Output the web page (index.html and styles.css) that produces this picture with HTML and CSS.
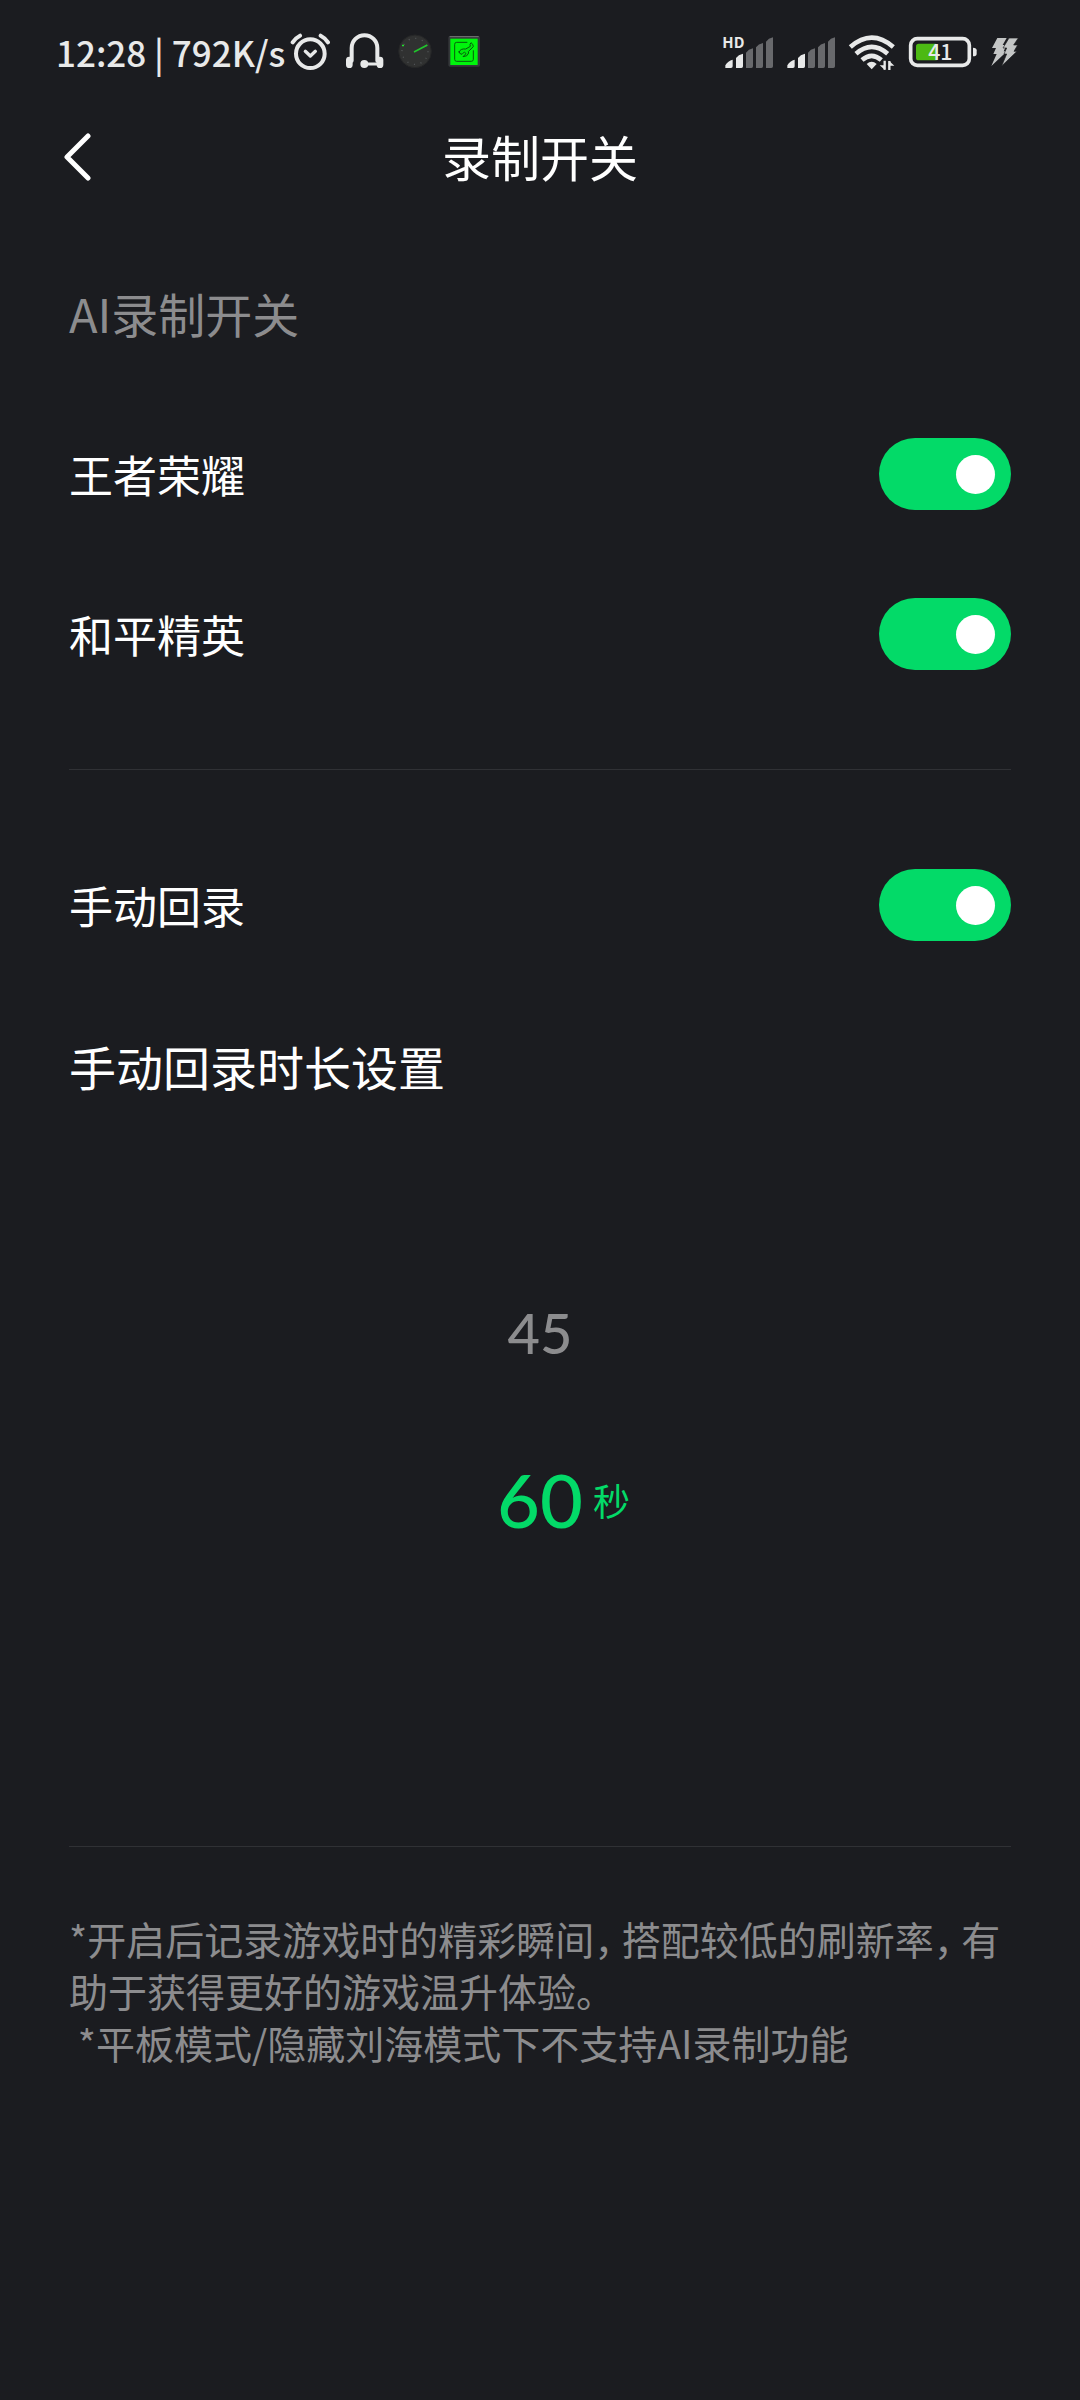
FILE: index.html
```html
<!DOCTYPE html>
<html lang="zh-CN">
<head>
<meta charset="utf-8">
<meta name="viewport" content="width=device-width, initial-scale=1">
<title>录制开关</title>
<link rel="stylesheet" href="styles.css">
</head>
<body>
<div class="status">
  <span class="status-text">12:28 | 792K/s</span>
  <div class="status-left">
    <svg width="41" height="43" viewBox="30 30 123 129" fill="none" stroke="#e8e9e9" stroke-linecap="round" stroke-linejoin="round">
      <circle cx="91" cy="101" r="43" stroke-width="12"/>
      <path d="M76 94l15 14 15-14" stroke-width="10"/>
      <path d="M38 67q8-13 22-20M122 47q14 7 22 20" stroke-width="12"/>
    </svg>
    <svg width="39" height="43" viewBox="192 30 117 129" fill="none" stroke="#e8e9e9" stroke-linecap="round">
      <path d="M212 122V84a38 38 0 0 1 77 0v38" stroke-width="12"/>
      <path d="M205 120v14M297 120v14" stroke-width="20"/>
      <path d="M250 132h42" stroke-width="9"/>
      <circle cx="250" cy="132" r="12" fill="#e8e9e9" stroke="none"/>
    </svg>
    <svg width="35" height="43" viewBox="354 30 105 129" fill="none">
      <circle cx="405" cy="94" r="49" fill="#303131" stroke="#252627" stroke-width="3"/>
      <circle cx="405" cy="94" r="39" stroke="#55585a" stroke-width="4" stroke-dasharray="3 17.4"/>
      <path d="M402 96l40-21" stroke="#20c62c" stroke-width="5"/>
      <path d="M366 74h6v5h-6z" fill="#20e02c"/>
    </svg>
    <svg width="34" height="43" viewBox="504 30 102 129" fill="none">
      <rect x="508" y="48" width="95" height="92" rx="5" fill="#34373a"/>
      <path d="M512 50h87" stroke="#777" stroke-width="3"/>
      <rect x="514" y="56" width="82" height="79" fill="#00f50c"/>
      <path d="M565 67h-32q-6 0-6 6v45q0 6 6 6h44q6 0 6-6V91" stroke="#075c0b" stroke-width="3"/>
      <path d="M540 94q0 8 9 9l7-7 5 5-9 9q14 0 17-11l-1-4 15-15q0-8-7-12l-3 5 1 6-14 8q-16-2-20 10z" stroke="#075c0b" stroke-width="3" fill="#00e80c"/>
    </svg>
  </div>
  <div class="status-right">
    <svg width="52" height="43" viewBox="72 30 156 129">
      <path class="on" d="M82 144v-8q8-14 22-17v20q0 5-5 5zM114 144v-30q7-10 21-13v38q0 5-5 5z"/>
      <path class="off" d="M144 144V98q7-10 21-13v54q0 5-5 5zM174 144V82q7-10 21-13v70q0 5-5 5zM204 144V65q7-10 21-13v87q0 5-5 5z"/>
      <text class="hd" x="73" y="83">HD</text>
    </svg>
    <svg width="50" height="43" viewBox="258 30 150 129">
      <path class="on" d="M262 144v-8q8-14 22-17v20q0 5-5 5zM294 144v-30q7-10 21-13v38q0 5-5 5z"/>
      <path class="off" d="M324 144V98q7-10 21-13v54q0 5-5 5zM354 144V82q7-10 21-13v70q0 5-5 5zM384 144V65q7-10 21-13v87q0 5-5 5z"/>
    </svg>
    <svg width="48" height="43" viewBox="441 30 144 129" fill="none" stroke="#e8e9e9" stroke-width="14">
      <path d="M448 81q64-56 129 0M465 101q47-41 95 0M483 120q29-25 58 0"/>
      <path d="M497 132q15-14 30 0l-15 16z" fill="#e8e9e9" stroke="none"/>
      <path d="M551 122v27M565 123v27" stroke-width="7"/>
      <path d="M536 136l16 14v-14zM564 122v15h16z" fill="#e8e9e9" stroke="none"/>
    </svg>
    <svg width="70" height="43" viewBox="624 30 210 129">
      <rect x="632" y="56" width="176" height="80" rx="20" fill="none" stroke="#e8e9e9" stroke-width="11"/>
      <rect x="648" y="71" width="66" height="50" rx="8" fill="#4cb913"/>
      <path d="M819 83q11 0 11 8v10q0 8-11 8z" class="on"/>
      <text class="level" x="721" y="121">41</text>
    </svg>
    <svg width="29" height="43" viewBox="870 30 87 129" fill="#c3c5c5">
      <path d="M892 54h28l-12 21h12l-9 19h10l-47 44 16-36h-10l8-18h-12z"/>
      <path d="M927 54h28l-14 21h12l-11 19h9l-46 44 15-36h-8l8-18h-11z" stroke="#1b1c20" stroke-width="2"/>
    </svg>
  </div>
</div>

<header class="header">
  <button class="back" type="button" aria-label="返回">
    <svg width="29" height="51" viewBox="0 0 29 51" fill="none" stroke="#fff" stroke-width="5" stroke-linecap="round" stroke-linejoin="round"><path d="M26 5L5 26l21 21"/></svg>
  </button>
  <h1 class="title">录制开关</h1>
</header>

<main class="content">
  <section class="group">
    <h2 class="caption">AI录制开关</h2>
    <label class="row">王者荣耀<input class="switch" type="checkbox" role="switch" checked></label>
    <label class="row">和平精英<input class="switch" type="checkbox" role="switch" checked></label>
  </section>
  <section class="group manual">
    <label class="row">手动回录<input class="switch" type="checkbox" role="switch" checked></label>
    <h2 class="row large" id="duration">手动回录时长设置</h2>
    <div class="picker" role="radiogroup" aria-labelledby="duration">
      <label class="option"><input class="choice" type="radio" name="duration" value="45"><span class="number">45</span><span class="unit">秒</span></label>
      <label class="option"><input class="choice" type="radio" name="duration" value="60" checked><span class="number">60</span><span class="unit">秒</span></label>
    </div>
  </section>
  <p class="notes">*开启后记录游戏时的精彩瞬间<span class="comma">，</span>搭配较低的刷新率<span class="comma">，</span>有助于获得更好的游戏温升体验。
 *平板模式/隐藏刘海模式下不支持AI录制功能</p>
</main>
</body>
</html>
```
FILE: styles.css
```css
* { box-sizing: border-box; }

body {
  margin: 0;
  min-height: 100vh;
  background: #1b1c20;
  color: #fff;
  font-family: "Noto Sans CJK SC", sans-serif;
}

svg { display: block; flex: none; }

.status {
  display: flex;
  align-items: center;
  height: 103px;
  padding: 0 61px 0 56px;
}
.status-text {
  margin-right: 5px;
  color: #e8e9e9;
  font-size: 35px;
  font-weight: 500;
  line-height: 48px;
  white-space: nowrap;
}
.status-left { display: flex; gap: 14px; }
.status-right { display: flex; gap: 12px; margin-left: auto; }
.on { fill: #e8e9e9; }
.off { fill: #68696c; }
.hd, .level {
  fill: #e8e9e9;
  font-size: 45px;
  font-weight: 700;
}
.level {
  font-size: 64px;
  font-weight: 500;
  text-anchor: middle;
}

.header {
  display: grid;
  grid-template-columns: 1fr auto 1fr;
  align-items: center;
  height: 106px;
  padding: 0 62px;
}
.back {
  justify-self: start;
  padding: 0;
  border: 0;
  background: none;
}
.title {
  margin: 0;
  font-size: 49px;
  font-weight: 400;
  line-height: 72px;
}

.content { padding: 0 69px; }
.group { border-bottom: 1px solid #303135; padding-bottom: 55px; }
.caption {
  margin: 0;
  padding: 69px 0 46px;
  color: #8c8c8e;
  font-size: 47px;
  font-weight: 400;
  line-height: 70px;
}
.row {
  display: flex;
  align-items: center;
  justify-content: space-between;
  height: 160px;
  margin: 0;
  font-size: 44px;
  font-weight: 400;
}
.large { font-size: 47px; }

.switch {
  appearance: none;
  display: flex;
  align-items: center;
  justify-content: flex-start;
  width: 132px;
  height: 72px;
  margin: 0;
  padding: 0 16px;
  border-radius: 36px;
  background: #55575c;
}
.switch::before {
  content: "";
  width: 39px;
  height: 39px;
  border-radius: 50%;
  background: #fff;
}
.switch:checked {
  justify-content: flex-end;
  background: #03da68;
}

.manual { padding: 55px 0 0; }
.picker { padding: 104px 0 263px; }
.option {
  display: grid;
  grid-template-columns: 1fr auto 1fr;
  align-items: center;
  height: 167px;
  color: #8c8c8e;
}
.choice {
  appearance: none;
  width: 1px;
  height: 1px;
  margin: 0;
}
.number {
  font-family: Lato, "Noto Sans CJK SC", sans-serif;
  font-size: 56px;
  font-weight: 500;
}
.unit {
  visibility: hidden;
  margin-left: 10px;
  font-size: 37px;
}
.choice:checked ~ .number { color: #03da68; font-size: 74px; }
.choice:checked ~ .unit { visibility: visible; color: #03da68; }

.notes {
  margin: 0;
  padding: 65px 0 80px;
  color: #8c8c8e;
  font-size: 39px;
  line-height: 52px;
  white-space: pre-wrap;
}
.comma {
  margin-right: 8px;
  font-feature-settings: "halt";
}
```
